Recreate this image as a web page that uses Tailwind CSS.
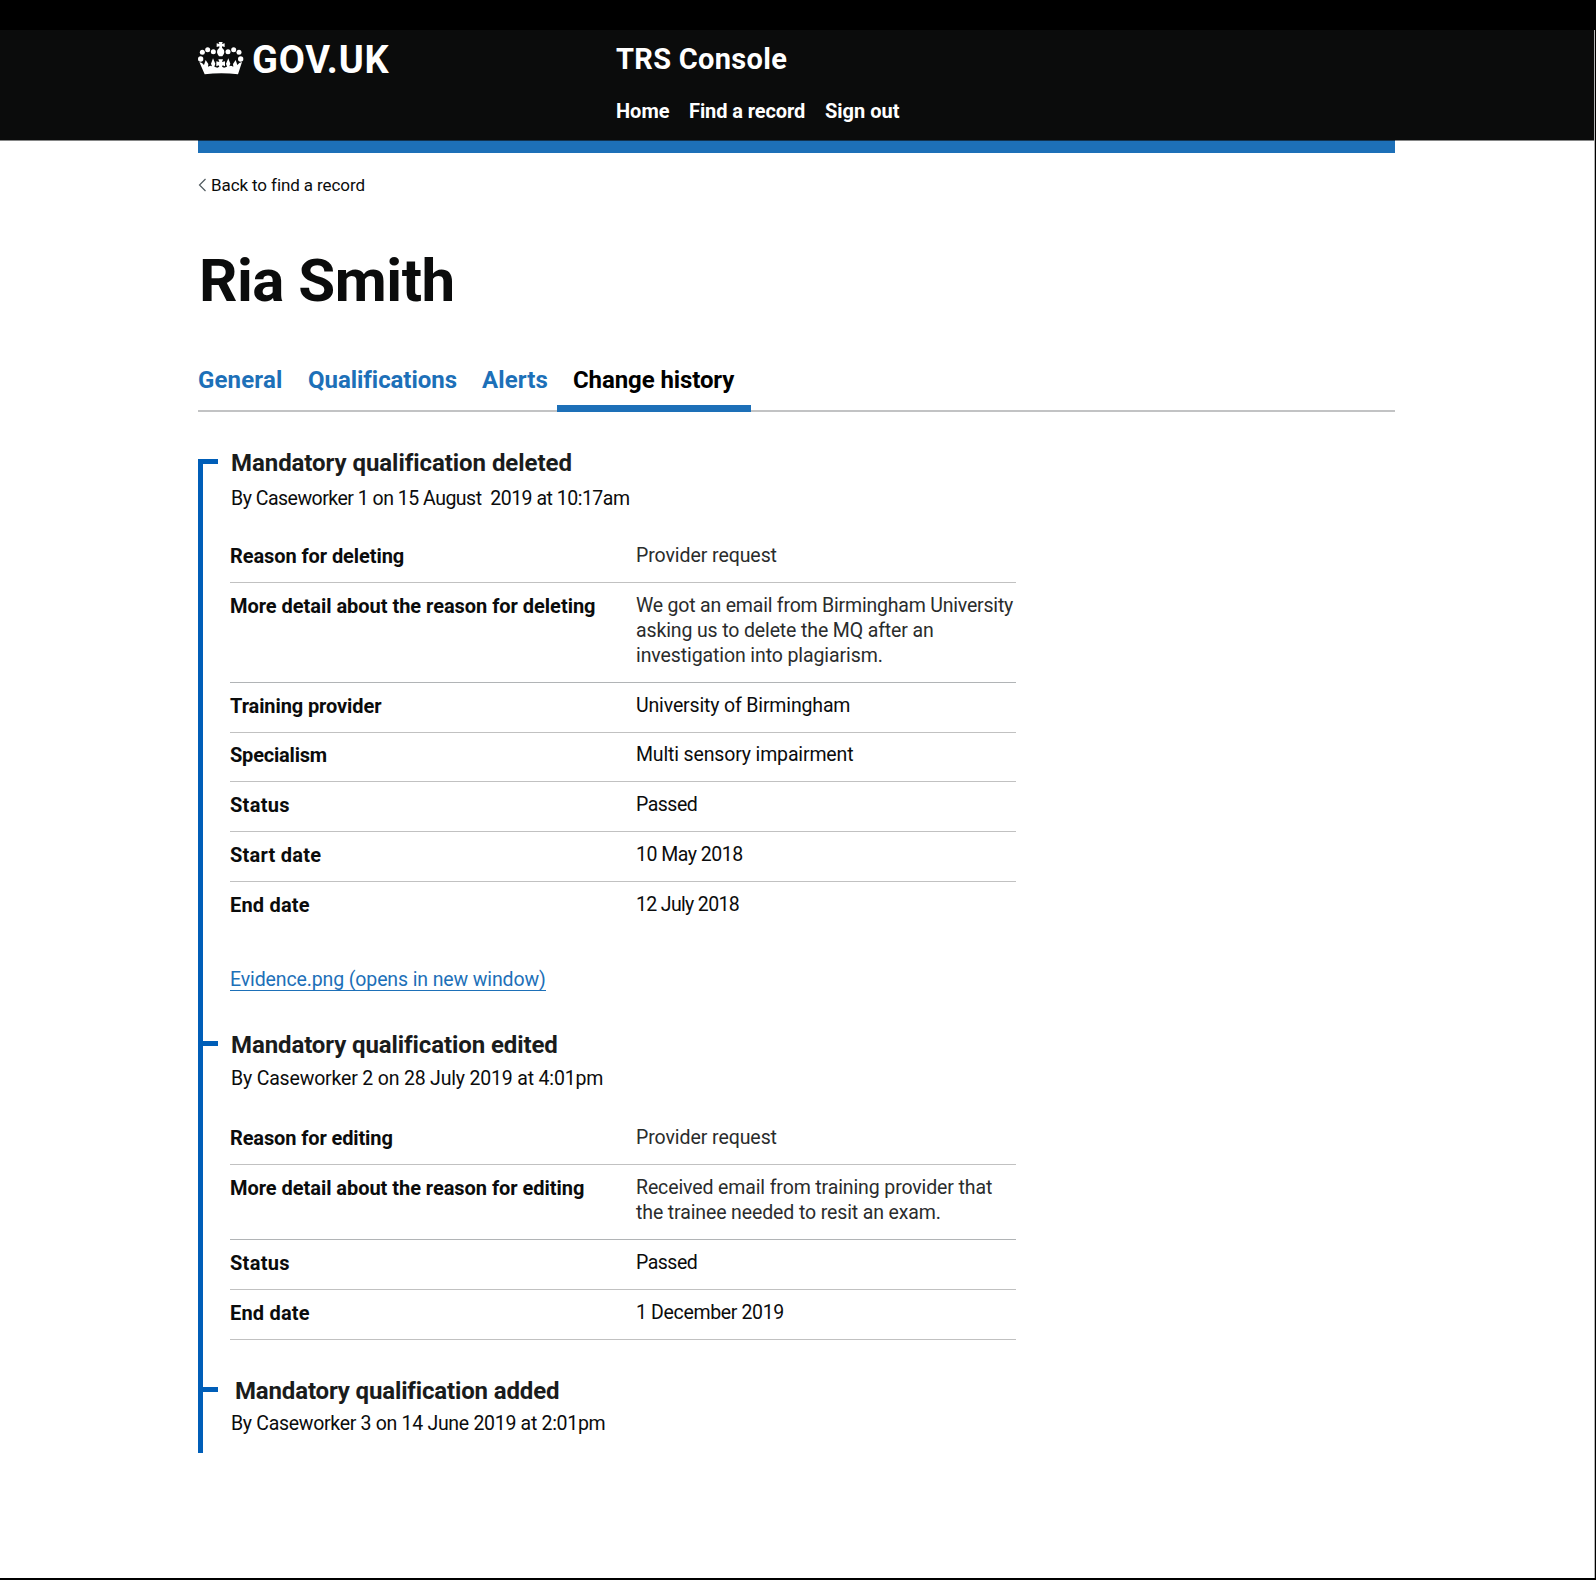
<!DOCTYPE html>
<html lang="en">
<head>
<meta charset="utf-8">
<title>Ria Smith - TRS Console</title>
<script src="https://cdn.jsdelivr.net/npm/@tailwindcss/browser@4"></script>
</head>
<body class="h-[1580px] overflow-hidden border-t-[30px] border-b-2 border-black bg-white font-[Roboto,sans-serif] text-[#0b0c0c]">
<div class="relative h-[1548px] border-r border-black">
  <div class="absolute right-0 top-0 h-full w-px bg-[#b5b5b5]"></div>

  <header class="h-[111px] border-b border-[#858686] bg-[#0b0c0c] text-white">
    <div class="ml-[198px] flex h-[111px] w-[1197px] border-b border-[#11324f]">
      <div class="flex w-[418px] items-start">
        <svg class="-ml-1 mt-1.5 h-11 w-14" viewBox="0 0 168 132" fill="#fff">
          <circle cx="20" cy="69" r="8"/><circle cx="25" cy="49" r="7.5"/><circle cx="41" cy="41" r="7.5"/><circle cx="58" cy="47" r="7.5"/>
          <circle cx="102" cy="47" r="7.5"/><circle cx="119" cy="41" r="7.5"/><circle cx="135" cy="49" r="7.5"/><circle cx="140" cy="69" r="8"/>
          <path d="M74 18h12l-2 6 8-2v11l-8-2v4q8 6 7 14-1 7-6 12h-10q-5-5-6-12-1-8 7-14v-4l-8 2V22l8 2z"/>
          <path d="M16 78q9 1 14 9l5-15 8 12-1 8 7-3 5 2-3-8 6-16 7 16-3 9 9 3 6-3-2-4-7 3V76l9 2-3-8h14l-3 8 9-2v15l-7-3-2 4 6 3 9-3-3-9 7-16 6 16-3 8 5-2 7 3-1-8 8-12 5 15q5-8 14-9l-12 37q-50-7-100 0z"/>
        </svg>
        <span class="ml-[2px] mt-2 text-[38px] leading-[44px] font-bold tracking-[0.8px]">GOV.UK</span>
      </div>
      <div class="pt-[11px]">
        <div class="text-[29px] leading-9 font-bold tracking-[0.3px]">TRS Console</div>
        <nav class="mt-[21px] flex text-[20px] leading-[26px] font-bold">
          <a class="w-[73px]">Home</a><a class="w-[136px] tracking-[-0.1px]">Find a record</a><a>Sign out</a>
        </nav>
      </div>
    </div>
  </header>

  <main class="ml-[198px] w-[1197px]">
    <div class="h-3 bg-[#1d70b8]"></div>
    <a class="mt-5 flex h-6 items-center text-[17px] leading-6 tracking-[-0.1px]">
      <svg class="h-[14px] w-[13px]" viewBox="0 0 13 14" fill="none" stroke="#505a5f" stroke-width="1.2"><path d="M7.5 1 1.5 7l6 6"/></svg>Back to find a record
    </a>
    <h1 class="ml-px mt-[51px] text-[60px] leading-[66px] font-bold tracking-[-0.5px]">Ria Smith</h1>

    <nav class="mt-10 flex h-[58px] items-stretch border-b-2 border-[#c2c3c4] text-[24px] leading-[52px] font-bold text-[#1d70b8]">
      <a class="w-[110px] tracking-[0.15px]">General</a>
      <a class="w-[174px] tracking-[-0.05px]">Qualifications</a>
      <a class="w-[75px] tracking-[0.1px]">Alerts</a>
      <a class="h-[58px] w-[194px] border-b-[7px] border-[#1d70b8] pl-4 tracking-[-0.1px] text-black">Change history</a>
    </nav>

    <div class="mt-[47px] flow-root border-l-[5px] border-[#005eb8] pb-[17px] pl-[27px]">
      <section class="flow-root">
        <h2 class="relative -mt-2 pl-px text-[24px] leading-6 font-bold tracking-[-0.06px] text-[#1a1c1c]"><span class="absolute -left-[27px] top-2 h-[5px] w-[15px] bg-[#005eb8]"></span>Mandatory qualification deleted</h2>
        <p class="mt-[11px] pl-px text-[19.5px] leading-[25px] tracking-[-0.5px] whitespace-pre">By Caseworker 1 on 15 August  2019 at 10:17am</p>
        <dl class="mt-[22px] w-[786px] text-[19.5px] leading-[25px] tracking-[-0.2px]">
          <div class="flex h-[50px] border-b border-[#c1c1c1] pt-[10px]"><dt class="w-[406px] pt-px text-[20px] font-bold tracking-[-0.08px]">Reason for deleting</dt><dd class="tracking-[-0.07px] text-[#2a2c2c]">Provider request</dd></div>
          <div class="flex h-[100px] border-b border-[#b1b4b6] pt-[10px]"><dt class="w-[406px] pt-px text-[20px] font-bold tracking-[-0.03px]">More detail about the reason for deleting</dt><dd class="text-[#2a2c2c]">We got an email from Birmingham University<br><span class="tracking-[-0.13px]">asking us to delete the MQ after an</span><br><span class="tracking-[-0.1px]">investigation into plagiarism.</span></dd></div>
          <div class="flex h-[50px] border-b border-[#c1c1c1] pt-[10px]"><dt class="w-[406px] pt-px text-[20px] font-bold tracking-[-0.1px]">Training provider</dt><dd class="tracking-[-0.15px]">University of Birmingham</dd></div>
          <div class="flex h-[49px] border-b border-[#c1c1c1] pt-[9px]"><dt class="w-[406px] pt-px text-[20px] font-bold">Specialism</dt><dd class="tracking-[-0.15px]">Multi sensory impairment</dd></div>
          <div class="flex h-[50px] border-b border-[#c1c1c1] pt-[10px]"><dt class="w-[406px] pt-px text-[20px] font-bold tracking-[0.3px]">Status</dt><dd class="tracking-[-0.5px]">Passed</dd></div>
          <div class="flex h-[50px] border-b border-[#c1c1c1] pt-[10px]"><dt class="w-[406px] pt-px text-[20px] font-bold tracking-[0.25px]">Start date</dt><dd class="tracking-[-0.5px]">10 May 2018</dd></div>
          <div class="flex h-[50px] pt-[10px]"><dt class="w-[406px] pt-px text-[20px] font-bold tracking-[0.2px]">End date</dt><dd class="tracking-[-0.65px]">12 July 2018</dd></div>
        </dl>
        <a class="mt-[35px] block h-6 w-[316px] border-b border-[#1d70b8] text-[19.5px] leading-[25px] tracking-[-0.12px] whitespace-nowrap text-[#1d70b8]">Evidence.png (opens in new window)</a>
      </section>

      <section class="mt-[42px]">
        <h2 class="relative pl-px text-[24px] leading-6 font-bold tracking-[-0.1px] text-[#1a1c1c]"><span class="absolute -left-[27px] top-2 h-[5px] w-[15px] bg-[#005eb8]"></span>Mandatory qualification edited</h2>
        <p class="mt-[9px] pl-px text-[19.5px] leading-[25px] tracking-[-0.18px]">By Caseworker 2 on 28 July 2019 at 4:01pm</p>
        <dl class="mt-6 w-[786px] text-[19.5px] leading-[25px] tracking-[-0.12px]">
          <div class="flex h-[50px] border-b border-[#c1c1c1] pt-[10px]"><dt class="w-[406px] pt-px text-[20px] font-bold tracking-[-0.12px]">Reason for editing</dt><dd class="tracking-[-0.07px] text-[#2a2c2c]">Provider request</dd></div>
          <div class="flex h-[75px] border-b border-[#b1b4b6] pt-[10px]"><dt class="w-[406px] pt-px text-[20px] font-bold tracking-[-0.04px]">More detail about the reason for editing</dt><dd class="text-[#2a2c2c]">Received email from training provider that<br>the trainee needed to resit an exam.</dd></div>
          <div class="flex h-[50px] border-b border-[#c1c1c1] pt-[10px]"><dt class="w-[406px] pt-px text-[20px] font-bold tracking-[0.3px]">Status</dt><dd class="tracking-[-0.5px]">Passed</dd></div>
          <div class="flex h-[50px] border-b border-[#c1c1c1] pt-[10px]"><dt class="w-[406px] pt-px text-[20px] font-bold tracking-[0.2px]">End date</dt><dd class="tracking-[-0.35px]">1 December 2019</dd></div>
        </dl>
      </section>

      <section class="mt-[39px]">
        <h2 class="relative pl-[5px] text-[24px] leading-6 font-bold tracking-[-0.15px] text-[#1a1c1c]"><span class="absolute -left-[27px] top-2 h-[5px] w-[15px] bg-[#005eb8]"></span>Mandatory qualification added</h2>
        <p class="mt-2 pl-px text-[19.5px] leading-[25px] tracking-[-0.3px]">By Caseworker 3 on 14 June 2019 at 2:01pm</p>
      </section>
    </div>
  </main>
</div>
</body>
</html>
